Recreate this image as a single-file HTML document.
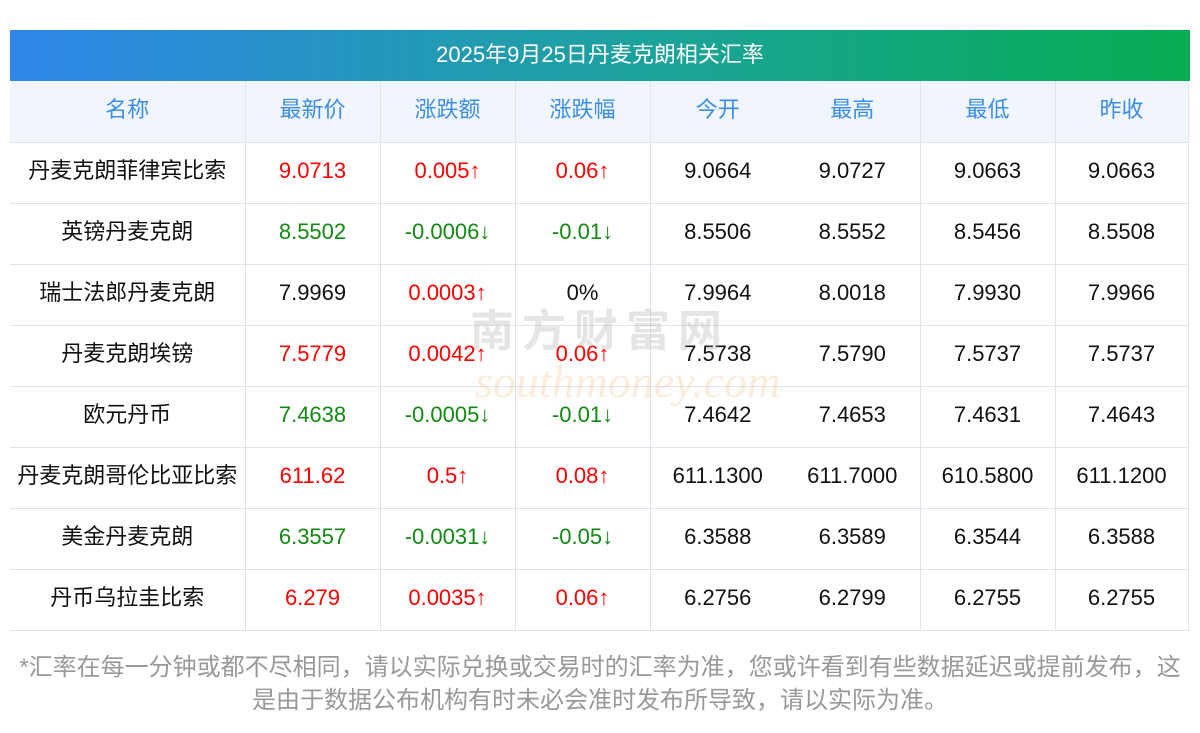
<!DOCTYPE html>
<html><head><meta charset="utf-8"><style>
body{margin:0;width:1200px;height:733px;background:#fff;font-family:"Liberation Sans","Noto Sans CJK SC",sans-serif;position:relative;overflow:hidden}
.title{position:absolute;left:10px;top:30px;width:1180px;height:51px;background:linear-gradient(90deg,#2f86ea,#1ba39a 55%,#07ad52);color:#fff;font-size:22px;line-height:49px;text-align:center}
table{position:absolute;left:10px;top:81px;border-collapse:collapse;table-layout:fixed;width:1178px}
td{height:60px;border:1px solid #dfe3ec;border-top:none;border-left:none;text-align:center;font-size:22px;line-height:22px;color:#111;padding:0 0 3px 0;box-sizing:border-box}
tr{height:61px}
tr.h td{background:#f1f6fe;color:#3b8de6}
td.nb{border-right:none}
tr td:first-child{border-left:none}
.r{color:#f00}.g{color:#118a11}
.foot{position:absolute;left:0;top:651px;width:1200px;text-align:center;font-size:24px;line-height:33px;color:#999;white-space:nowrap}
.wm{position:absolute;left:470px;top:295px;font-size:44px;color:rgba(160,160,160,.28);letter-spacing:8px;font-weight:bold}
.wm2{position:absolute;left:475px;top:355px;font-size:46px;color:rgba(240,170,90,.22);font-family:"Liberation Serif",serif;font-style:italic}
</style></head><body>
<div class="title">2025年9月25日丹麦克朗相关汇率</div>
<table>
<colgroup><col style="width:235px"><col style="width:135px"><col style="width:135px"><col style="width:135px"><col style="width:135px"><col style="width:135px"><col style="width:135px"><col style="width:133px"></colgroup>
<tr class="h"><td>名称</td><td>最新价</td><td>涨跌额</td><td>涨跌幅</td><td class="nb">今开</td><td>最高</td><td>最低</td><td>昨收</td></tr>
<tr><td>丹麦克朗菲律宾比索</td><td class="r">9.0713</td><td class="r">0.005↑</td><td class="r">0.06↑</td><td class="nb">9.0664</td><td>9.0727</td><td>9.0663</td><td>9.0663</td></tr>
<tr><td>英镑丹麦克朗</td><td class="g">8.5502</td><td class="g">-0.0006↓</td><td class="g">-0.01↓</td><td class="nb">8.5506</td><td>8.5552</td><td>8.5456</td><td>8.5508</td></tr>
<tr><td>瑞士法郎丹麦克朗</td><td>7.9969</td><td class="r">0.0003↑</td><td>0%</td><td class="nb">7.9964</td><td>8.0018</td><td>7.9930</td><td>7.9966</td></tr>
<tr><td>丹麦克朗埃镑</td><td class="r">7.5779</td><td class="r">0.0042↑</td><td class="r">0.06↑</td><td class="nb">7.5738</td><td>7.5790</td><td>7.5737</td><td>7.5737</td></tr>
<tr><td>欧元丹币</td><td class="g">7.4638</td><td class="g">-0.0005↓</td><td class="g">-0.01↓</td><td class="nb">7.4642</td><td>7.4653</td><td>7.4631</td><td>7.4643</td></tr>
<tr><td>丹麦克朗哥伦比亚比索</td><td class="r">611.62</td><td class="r">0.5↑</td><td class="r">0.08↑</td><td class="nb">611.1300</td><td>611.7000</td><td>610.5800</td><td>611.1200</td></tr>
<tr><td>美金丹麦克朗</td><td class="g">6.3557</td><td class="g">-0.0031↓</td><td class="g">-0.05↓</td><td class="nb">6.3588</td><td>6.3589</td><td>6.3544</td><td>6.3588</td></tr>
<tr><td>丹币乌拉圭比索</td><td class="r">6.279</td><td class="r">0.0035↑</td><td class="r">0.06↑</td><td class="nb">6.2756</td><td>6.2799</td><td>6.2755</td><td>6.2755</td></tr>
</table>
<div class="wm">南方财富网</div>
<div class="wm2">southmoney.com</div>
<div class="foot">*汇率在每一分钟或都不尽相同，请以实际兑换或交易时的汇率为准，您或许看到有些数据延迟或提前发布，这<br>是由于数据公布机构有时未必会准时发布所导致，请以实际为准。</div>
</body></html>
